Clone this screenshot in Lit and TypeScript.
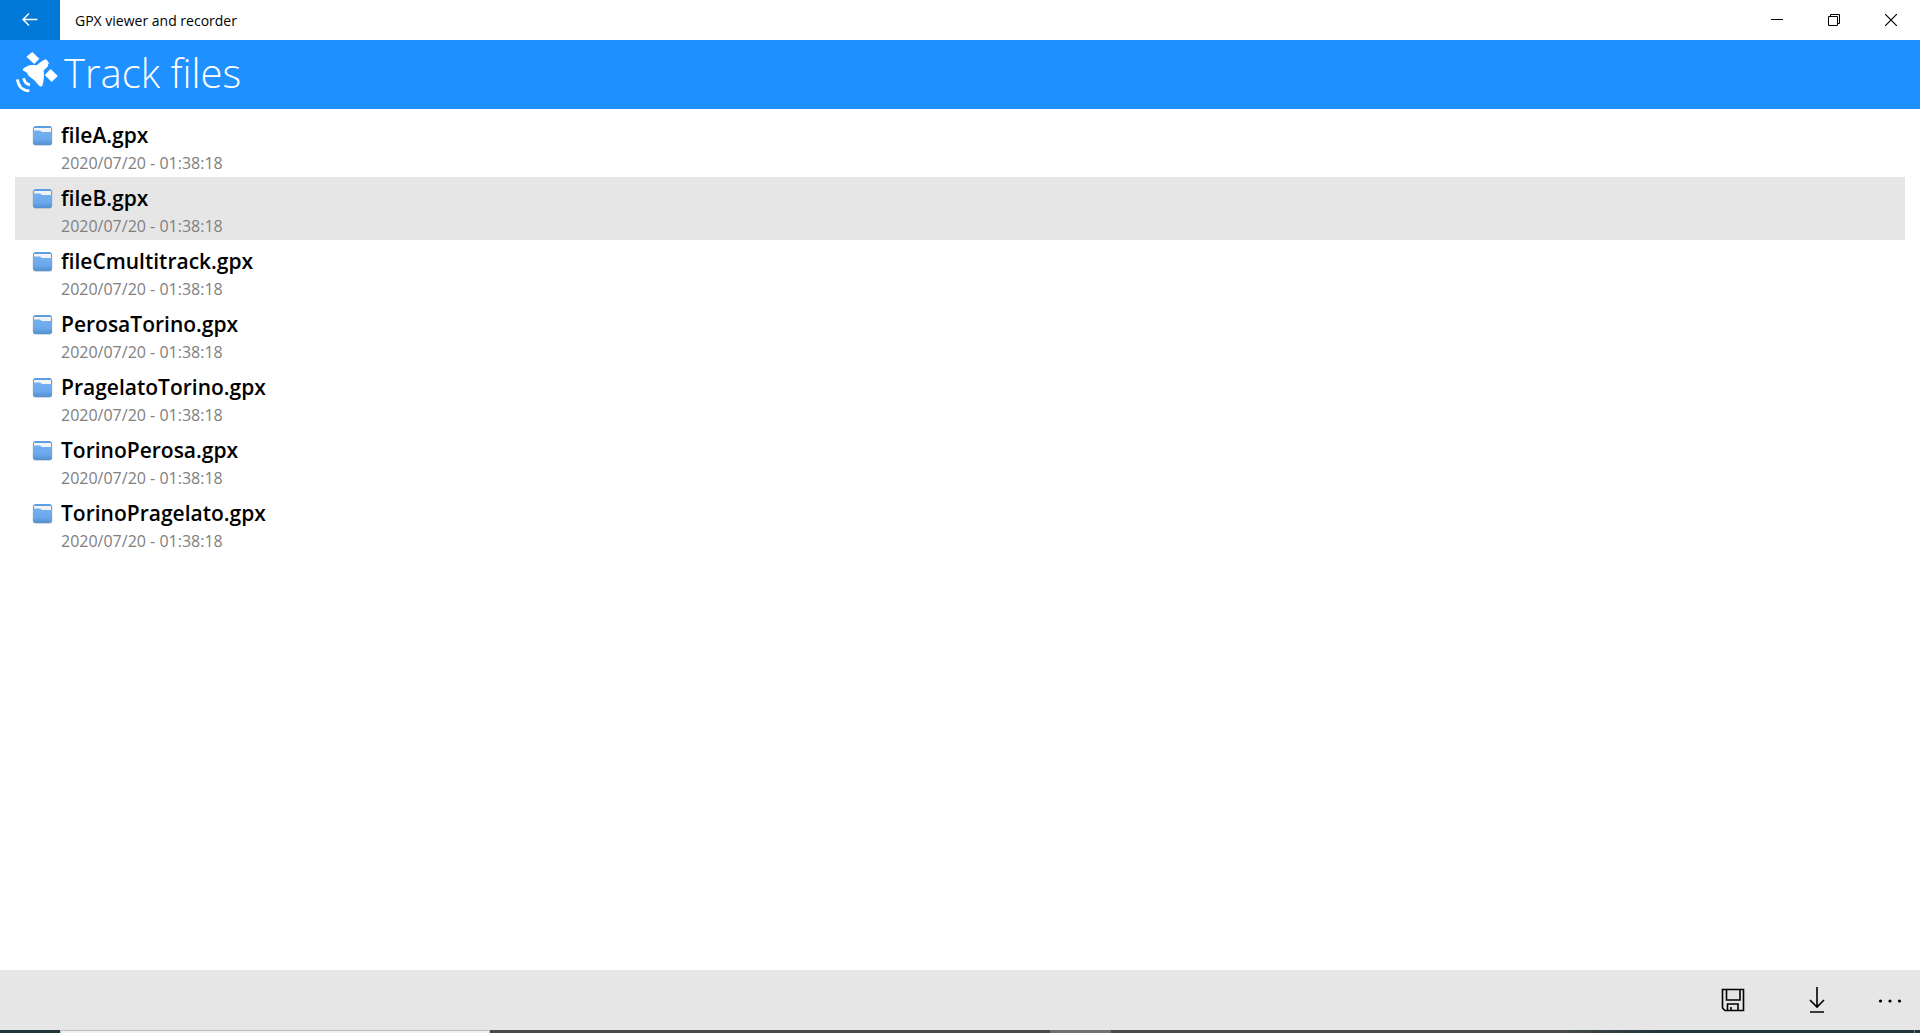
import { LitElement, html, css, svg } from "lit";
import { customElement, state } from "lit/decorators.js";

interface TrackFile {
  name: string;
  date: string;
}

const DATE = "2020/07/20 - 01:38:18";

const FILES: TrackFile[] = [
  "fileA.gpx",
  "fileB.gpx",
  "fileCmultitrack.gpx",
  "PerosaTorino.gpx",
  "PragelatoTorino.gpx",
  "TorinoPerosa.gpx",
  "TorinoPragelato.gpx",
].map((name) => ({ name, date: DATE }));

const stroke = (d: string) => svg`<path d=${d} fill="none" stroke="currentColor" />`;

@customElement("folder-icon")
export class FolderIcon extends LitElement {
  static styles = css`
    :host {
      display: block;
      width: 22px;
      height: 23px;
    }
    svg {
      display: block;
    }
  `;

  render() {
    return html`<svg width="22" height="22" viewBox="0.5 1 22 22" aria-hidden="true">
      <defs>
        <linearGradient id="front" x1="0" y1="0" x2="0" y2="1">
          <stop offset="0" stop-color="#74b0f0" />
          <stop offset="0.6" stop-color="#6ca9ec" />
          <stop offset="1" stop-color="#5490d0" />
        </linearGradient>
      </defs>
      <rect x="1.2" y="1.5" width="19.6" height="19.2" rx="3.5" fill="#8b98a8" opacity="0.5" />
      <rect x="1.5" y="1" width="19" height="19" rx="3" fill="#5d9de2" />
      <path d="M2.500 3h17v8h-17z" fill="#f1f3f5" />
      <path d="M1.500 5.500H8.500L10.500 7H20.500V17A3 3 0 0 1 17.500 20H4.500A3 3 0 0 1 1.500 17Z" fill="url(#front)" />
    </svg>`;
  }
}

@customElement("app-root")
export class AppRoot extends LitElement {
  @state() private selected = 1;

  static styles = css`
    :host {
      display: flex;
      flex-direction: column;
      min-height: 100vh;
      background: #ffffff;
      color: #000000;
      font-family: "Segoe UI", "Open Sans", "Noto Sans", sans-serif;
    }
    button {
      border: 0;
      padding: 0;
      background: none;
      color: inherit;
      font: inherit;
      display: flex;
      align-items: center;
      justify-content: center;
    }
    svg {
      display: block;
    }
    .titlebar {
      display: flex;
      gap: 1px;
      height: 40px;
      padding-right: 1px;
    }
    .back {
      width: 60px;
      background: #0078d7;
      color: #ffffff;
    }
    .app-name {
      flex: 1;
      padding-left: 14px;
      font-size: 14px;
      line-height: 42px;
    }
    .window-button {
      width: 56px;
    }
    .header {
      display: flex;
      align-items: center;
      box-sizing: border-box;
      height: 69px;
      padding: 0 16px 3px;
      gap: 6px;
      background: #1e90ff;
      color: #ffffff;
    }
    .title {
      margin: 0;
      font-size: 40px;
      line-height: 64px;
      font-weight: 300;
    }
    .files {
      flex: 1;
      margin: 0;
      padding: 5px 15px;
      list-style: none;
    }
    .file {
      display: grid;
      grid-template-columns: 22px 1fr;
      grid-template-rows: 28px 28px;
      column-gap: 7px;
      width: 100%;
      height: 63px;
      padding: 7px 0 0 17px;
      align-content: start;
      align-items: end;
      justify-content: stretch;
      text-align: left;
    }
    .file.selected {
      background: #e6e6e6;
    }
    .name {
      font-size: 21px;
      line-height: 28px;
      font-weight: 600;
    }
    .date {
      grid-column: 2;
      font-size: 16px;
      line-height: 28px;
      color: #808080;
    }
    .commands {
      display: flex;
      justify-content: flex-end;
      height: 60px;
      background: #e6e6e6;
    }
    .command {
      width: 84px;
    }
    .more {
      width: 61px;
      padding-top: 2px;
    }
    .taskbar {
      display: flex;
      height: 3px;
      background: linear-gradient(90deg, #474b4a 1560px, #20343c 1660px);
    }
    .start {
      width: 60px;
      background: #20343c;
    }
    .search {
      width: 430px;
      box-sizing: border-box;
      border: 1px solid #bcbcbc;
      border-bottom: 0;
      background: #f2f2f2;
    }
    .active-task {
      width: 61px;
      margin-left: 560px;
      background: #6e7271;
    }
    .desktop-edge {
      width: 1px;
      margin-left: auto;
      margin-right: 5px;
      background: #7b878b;
    }
  `;

  render() {
    return html`
      <div class="titlebar">
        <button class="back" aria-label="Back">
          <svg width="16" height="14" viewBox="0 0 16 14">
            <g stroke-width="1.4">${stroke("M15.500 6.500H1M7 0.500L1 6.500L7 12.500")}</g>
          </svg>
        </button>
        <div class="app-name">GPX viewer and recorder</div>
        <button class="window-button" aria-label="Minimize">
          <svg width="12" height="12" viewBox="0 0 12 12">${stroke("M0 5.500H12")}</svg>
        </button>
        <button class="window-button" aria-label="Restore">
          <svg width="12" height="12" viewBox="0 0 12 12">${stroke("M.5 2.500H9.500V11.500H.5ZM2.500 2.500V.5H11.500V9.500H9.500")}</svg>
        </button>
        <button class="window-button" aria-label="Close">
          <svg width="12" height="12" viewBox="0 0 12 12">
            <g stroke-width="1.2">${stroke("M0 0L12 12M12 0L0 12")}</g>
          </svg>
        </button>
      </div>
      <header class="header">
        <svg width="42" height="42" viewBox="0 0 42 42" fill="currentColor" aria-hidden="true">
          <path d="M16.300 0L23.300 6.800L18.300 12L10.400 4.700Z" />
          <path d="M34.700 16.900L41.800 24L35.700 30L28.700 23Z" />
          <path d="M10.700 14.500C13 13 17 12.800 20.700 13.300L25 9.800L27.500 8.300L29.700 7.300L31 8.200L33 11.300L31.700 13L32.300 14L27.700 18.500C28.300 22 28 28 26.500 33.500C26 34.800 24 34.800 23.200 33.700L18.300 28.300L12.500 23.700C12 22 11 20.700 9.500 19.800C8 19 6.500 18.500 6.800 17.500C7.500 16 9 15.200 10.700 14.500Z" />
          <path d="M1.500 27.300C2 34 6.500 38.300 13.300 38.800M7.700 26.300C8.300 30 10.300 32.200 14 32.800" fill="none" stroke="currentColor" stroke-width="2.8" />
        </svg>
        <h1 class="title">Track files</h1>
      </header>
      <ul class="files">
        ${FILES.map(
          (file, i) => html`<li>
            <button
              class="file ${i === this.selected ? "selected" : ""}"
              @click=${() => (this.selected = i)}
            >
              <folder-icon></folder-icon>
              <span class="name">${file.name}</span>
              <span class="date">${file.date}</span>
            </button>
          </li>`
        )}
      </ul>
      <div class="commands">
        <button class="command" aria-label="Save">
          <svg width="24" height="24" viewBox="0 0 24 24">
            <g stroke-width="1.6">${stroke("M2 1.500H22.500V22.500H4L1.500 20V1.500ZM5.500 1.500V12H19V1.500M6.500 22.500V16H17V22.500M10 22V19")}</g>
          </svg>
        </button>
        <button class="command" aria-label="Download">
          <svg width="16" height="26" viewBox="0 0 16 26">
            <g stroke-width="1.6">${stroke("M8 0V20M1 13L8 20L15 13M1 25H15")}</g>
          </svg>
        </button>
        <button class="more" aria-label="More">
          <svg width="24" height="4" viewBox="0 0 24 4" fill="currentColor">
            <circle cx="2.500" cy="2" r="1.600" /><circle cx="12" cy="2" r="1.600" /><circle cx="21.500" cy="2" r="1.600" />
          </svg>
        </button>
      </div>
      <div class="taskbar" aria-hidden="true">
        <div class="start"></div>
        <div class="search"></div>
        <div class="active-task"></div>
        <div class="desktop-edge"></div>
      </div>
    `;
  }
}
